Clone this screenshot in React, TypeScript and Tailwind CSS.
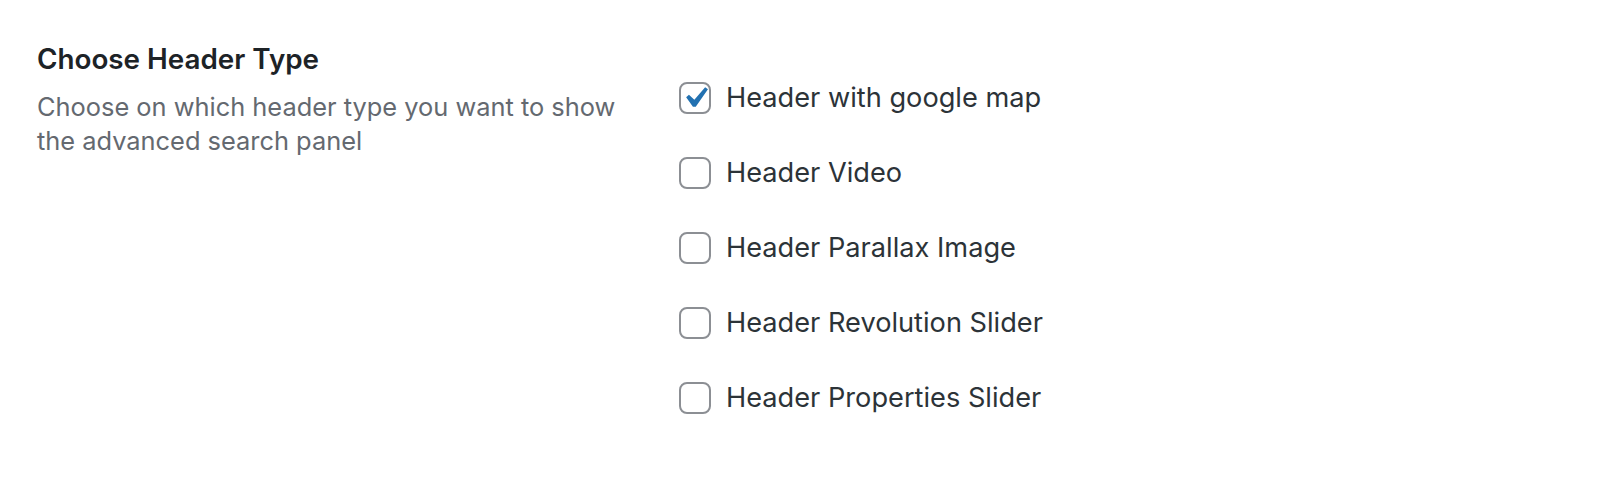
import { useState } from "react";

const OPTIONS = [
  "Header with google map",
  "Header Video",
  "Header Parallax Image",
  "Header Revolution Slider",
  "Header Properties Slider",
];

function CheckMark() {
  return (
    <svg viewBox="0 0 20 20" className="w-[42px] h-[42px] -m-[7px] shrink-0" fill="#2271b1">
      <path d="M14.83 4.89l1.34.94-5.81 8.38H9.02L5.78 9.67l1.34-1.25 2.57 2.4z" />
    </svg>
  );
}

export default function App() {
  const [checked, setChecked] = useState<boolean[]>([true, false, false, false, false]);

  const toggle = (i: number) =>
    setChecked((prev) => prev.map((v, idx) => (idx === i ? !v : v)));

  return (
    <div className="w-[1598px] h-[494px] bg-white font-['Inter','Liberation_Sans',sans-serif] antialiased">
      <div className="flex pt-[41px]">
        <div className="w-[679px] pl-[37px] pr-6 shrink-0">
          <h2 className="text-[27.8px] leading-[36px] font-semibold text-[#1d2327]">Choose Header Type</h2>
          <p className="mt-[13px] text-[25.4px] leading-[34px] text-[#646970]">
            Choose on which header type you want to show the advanced search panel
          </p>
        </div>
        <div className="flex flex-col gap-[43px] pt-[41px]">
          {OPTIONS.map((label, i) => (
            <label key={label} className="flex items-center gap-[15px] cursor-pointer" onClick={() => toggle(i)}>
              <span className="w-[32px] h-[32px] rounded-[8px] border-2 border-[#8c8f94] bg-white flex items-center justify-center">
                {checked[i] && <CheckMark />}
              </span>
              <span className="text-[27.2px] leading-[32px] text-[#2c3338]">{label}</span>
            </label>
          ))}
        </div>
      </div>
    </div>
  );
}
